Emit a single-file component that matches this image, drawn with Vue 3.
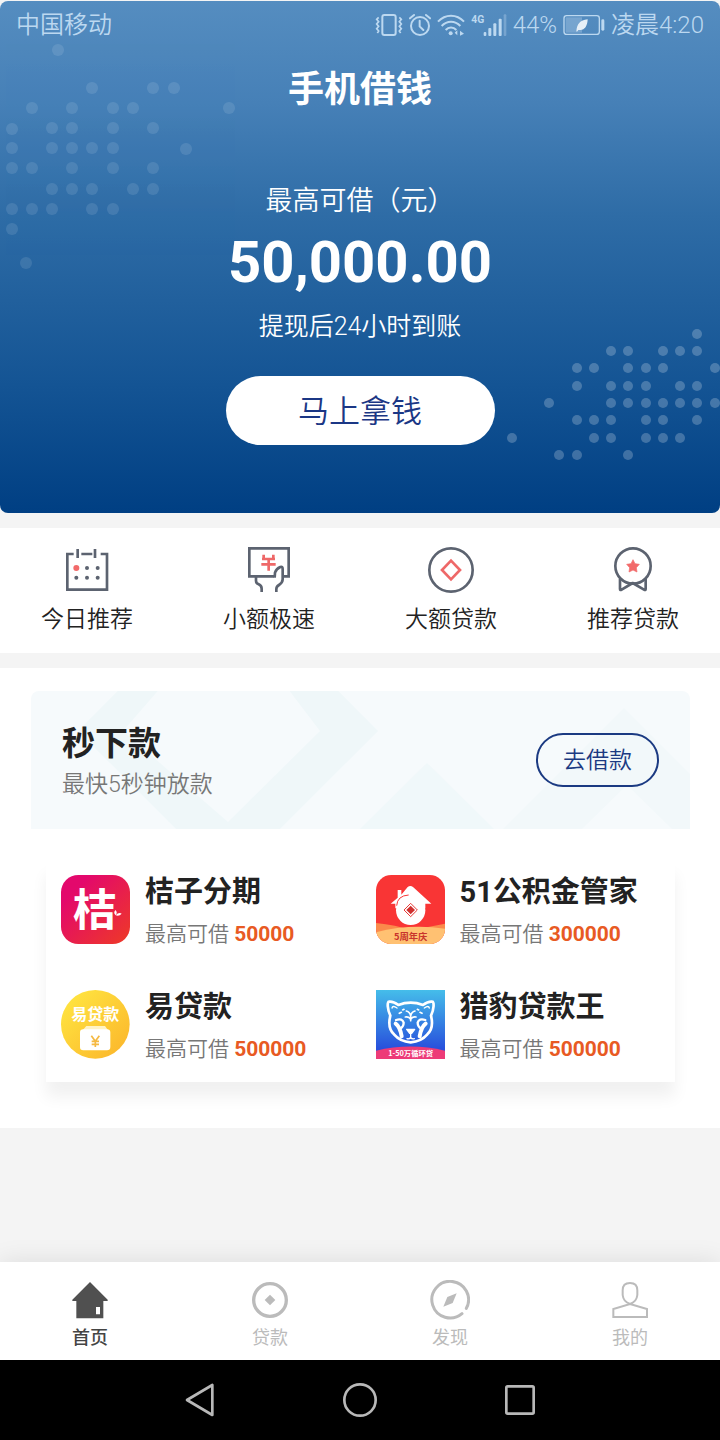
<script setup>
const leftDots = [
  [58, 50], [92, 88], [153, 88], [174, 88], [32, 108], [72, 108], [113, 108], [133, 108], [229, 108],
  [12, 129], [52, 128], [72, 128], [113, 128], [153, 128], [12, 148], [52, 148], [72, 148], [92, 148],
  [113, 148], [186, 149], [12, 168], [32, 168], [72, 168], [113, 168], [153, 168], [52, 189], [72, 189],
  [92, 189], [133, 189], [153, 189], [12, 209], [32, 209], [52, 209], [92, 209], [113, 209], [12, 229], [26, 263],
]
const rightRows = [
  [4, [197]],
  [21, [111, 128, 163, 180, 197]],
  [38, [77, 94, 128, 146, 163, 215]],
  [56, [77, 111, 128, 146, 180, 197]],
  [73, [49, 111, 128, 146, 163, 180, 197, 215]],
  [90, [77, 94, 111, 146, 163, 197]],
  [108, [12, 94, 111, 146, 163, 180]],
  [125, [59, 77, 128]],
]
const shortcuts = [
  { id: 'calendar', label: '今日推荐' },
  { id: 'cash', label: '小额极速' },
  { id: 'coin', label: '大额贷款' },
  { id: 'medal', label: '推荐贷款' },
]
const loans = [
  { id: 'juzi', name: '桔子分期', amount: '50000' },
  { id: 'fund', name: '51公积金管家', amount: '300000' },
  { id: 'yidai', name: '易贷款', amount: '500000' },
  { id: 'cheetah', name: '猎豹贷款王', amount: '500000' },
]
const tabs = [
  { id: 'home', label: '首页' },
  { id: 'loan', label: '贷款' },
  { id: 'find', label: '发现' },
  { id: 'mine', label: '我的' },
]
</script>

<template>
  <div class="page">
    <header class="hero">
      <svg class="dots dots-left" width="240" height="280" aria-hidden="true">
        <circle v-for="(d, i) in leftDots" :key="i" :cx="d[0]" :cy="d[1] - 1" r="6" />
      </svg>
      <svg class="dots dots-right" width="220" height="136" aria-hidden="true">
        <g v-for="row in rightRows" :key="row[0]">
          <circle v-for="x in row[1]" :key="x" :cx="x" :cy="row[0] + 2" r="5" />
        </g>
      </svg>

      <div class="status">
        <span>中国移动</span>
        <div class="status-right">
          <svg width="28" height="24" viewBox="48 36 84 72" fill="none" stroke="currentColor" stroke-width="6">
            <rect x="70" y="42" width="40" height="60" rx="6" />
            <path d="M59 49l-6 6 6 7-6 7 6 7-6 7 6 7-4 6M121 49l6 6-6 7 6 7-6 7 6 7-6 7 4 6" stroke-width="5" />
          </svg>
          <svg width="22" height="24" viewBox="156 36 66 72" fill="none" stroke="currentColor" stroke-width="6" stroke-linecap="round">
            <circle cx="189" cy="75" r="27" />
            <path d="M188 59v17l11 11M159 52l12-10M219 52l-12-10" />
          </svg>
          <svg width="28" height="24" viewBox="240 36 84 72" fill="none" stroke="currentColor" stroke-width="6">
            <path d="M243 62c22-24 56-24 78 0M254 75c16-17 40-17 56 0M266 87c9-10 23-10 32 0" />
            <circle cx="281" cy="97" r="6" fill="currentColor" stroke="none" />
            <path d="M301 88v15l-8-8zM309 104V89l12 9z" fill="currentColor" stroke="none" />
          </svg>
          <svg width="36" height="24" viewBox="340 36 108 72" fill="currentColor">
            <text x="341" y="67" class="net">4G</text>
            <rect x="378" y="93" width="8" height="12" rx="3" /><rect x="392" y="81" width="9" height="24" rx="3" />
            <rect x="407" y="67" width="9" height="38" rx="3" /><rect x="423" y="53" width="9" height="52" rx="3" />
            <rect x="438" y="40" width="8" height="65" rx="3" opacity=".35" />
          </svg>
          <span>44%</span>
          <svg width="42" height="24" viewBox="608 36 126 72" fill="currentColor">
            <rect x="611" y="44" width="106" height="56" rx="8" fill="none" stroke="currentColor" stroke-width="4" />
            <rect x="616" y="49" width="49" height="46" opacity=".35" />
            <rect x="723" y="55" width="9" height="34" rx="4" />
            <path d="M648 91c2-22 10-33 34-36-1 24-12 36-29 31l18-22-21 28z" fill="#e6eff7" />
          </svg>
          <span>凌晨4:20</span>
        </div>
      </div>

      <h1>手机借钱</h1>
      <p class="quota-label">最高可借（元）</p>
      <p class="quota">50,000.00</p>
      <p class="quota-note">提现后24小时到账</p>
      <button class="get" type="button">马上拿钱</button>
    </header>

    <nav class="shortcuts" aria-label="快捷入口">
      <a v-for="s in shortcuts" :key="s.id" href="#">
        <svg v-if="s.id === 'calendar'" width="48" height="48" viewBox="189 78 144 144" fill="none" stroke="#5c6370" stroke-width="8">
          <path d="M221 102h-19v107h119V102h-19M244 102h33M233 87v27M285 87v27" />
          <g fill="#5c6370" stroke="none">
            <circle cx="261" cy="144" r="6" /><circle cx="293" cy="144" r="6" />
            <circle cx="229" cy="173" r="6" /><circle cx="261" cy="173" r="6" /><circle cx="293" cy="173" r="6" />
            <circle cx="229" cy="144" r="9" fill="#f26a6a" />
          </g>
        </svg>
        <svg v-else-if="s.id === 'cash'" width="48" height="48" viewBox="735 78 144 144" fill="none" stroke="#5c6370" stroke-width="8">
          <path d="M823 169h-75V85h118v84h-14" />
          <path d="M768 171v11q0 8 8 11 9 4 9 13v10M829 216v-9q0-7 8-12 11-7 11-17v-31q0-9-7-6-12 5-16 17l-1 15" stroke-width="8" />
          <path d="M791 104v12M820 104v12M786 117h39M784 133h43M806 118v34" stroke="#ee6868" stroke-width="8" />
        </svg>
        <svg v-else-if="s.id === 'coin'" width="48" height="48" viewBox="201 78 144 144" fill="none" stroke="#5c6370" stroke-width="8">
          <circle cx="273" cy="150" r="65" />
          <path d="M273 122l27 28-27 28-27-28z" stroke="#ee6868" stroke-width="8" />
        </svg>
        <svg v-else width="48" height="48" viewBox="747 78 144 144" fill="none" stroke="#5c6370" stroke-width="8" stroke-linejoin="round">
          <circle cx="819" cy="138" r="53" />
          <path d="M780 176v31q0 5 5 2l33-20 34 20q5 3 5-2v-31" />
          <path d="M819 119l6 12 13 2-9 10 2 13-12-6-12 6 2-13-9-10 13-2z" fill="#f26a6a" stroke="#f26a6a" stroke-width="2" />
        </svg>
        <span>{{ s.label }}</span>
      </a>
    </nav>

    <main class="content">
      <section class="banner">
        <svg class="banner-art" viewBox="0 0 659 138" preserveAspectRatio="none" aria-hidden="true">
          <path d="M197-111L347 40 197 190 47 40zM197-81L92 40l105 91 92-91z" fill="#eff7f9" fill-rule="evenodd" />
          <path d="M396 72l67 66H329z" fill="#f0f8fa" />
          <path d="M472 138L593 17l66 66v55h-18l-45-44-45 44z" fill="#f2f8fa" />
        </svg>
        <div class="banner-text">
          <h2>秒下款</h2>
          <p>最快5秒钟放款</p>
        </div>
        <button class="borrow" type="button">去借款</button>
      </section>

      <section class="loans">
        <a v-for="l in loans" :key="l.id" class="loan" href="#">
          <svg v-if="l.id === 'juzi'" class="logo" viewBox="0 0 207 207">
            <defs><linearGradient id="gj" x1="0" y1="0" x2="1" y2="1"><stop offset=".2" stop-color="#e3086c" /><stop offset="1" stop-color="#ee3a26" /></linearGradient></defs>
            <rect width="207" height="207" rx="52" fill="url(#gj)" />
            <text x="101" y="152" text-anchor="middle" class="logo-juzi">桔</text>
            <path d="M164 121q-8-7-1-16 8 7 1 16q9-10 18-5-8 9-18 5z" fill="#fff" />
          </svg>
          <svg v-else-if="l.id === 'fund'" class="logo" viewBox="0 0 207 207">
            <defs><clipPath id="cf"><rect width="207" height="207" rx="46" /></clipPath></defs>
            <g clip-path="url(#cf)">
              <rect width="207" height="207" fill="#f93535" />
              <path d="M0 144q60 6 105 22l102-20v61H0z" fill="#fb8a4b" />
              <path d="M0 172q100-26 207-11v46H0z" fill="#ffc172" />
              <path d="M44 86l21-18V45h11v14l19-23q8-6 16 0l55 50h-18v14H58V86z" fill="#fff" />
              <circle cx="104" cy="106" r="44" fill="#fff" />
              <path d="M62 92q2-30 36-32" fill="none" stroke="#f93535" stroke-width="3" />
              <path d="M104 85l20 20-20 20-20-20z" fill="none" stroke="#e93a35" stroke-width="3" />
              <path d="M104 92l13 13-13 13-13-13z" fill="#cf302f" />
            </g>
            <text x="104" y="195" text-anchor="middle" class="logo-fund">5周年庆</text>
          </svg>
          <svg v-else-if="l.id === 'yidai'" class="logo" viewBox="0 0 207 207">
            <defs><linearGradient id="gy" x1="0" y1="0" x2="1" y2="1"><stop offset=".1" stop-color="#ffe440" /><stop offset="1" stop-color="#fbb32a" /></linearGradient></defs>
            <circle cx="103" cy="103" r="103" fill="url(#gy)" />
            <text x="103" y="89" text-anchor="middle" class="logo-yidai">易贷款</text>
            <path d="M76 108h56l11 15H63z" fill="#fff3c4" />
            <rect x="57" y="118" width="91" height="63" rx="10" fill="#fff" />
            <path d="M91 137l12 17 12-17M103 154v17M92 154h22M92 163h22" fill="none" stroke="#f5b942" stroke-width="5" />
          </svg>
          <svg v-else class="logo" viewBox="0 0 207 207">
            <defs><linearGradient id="gc" x1="0" y1="0" x2="0" y2="1"><stop offset="0" stop-color="#45bdea" /><stop offset=".85" stop-color="#2850dc" /></linearGradient></defs>
            <rect width="207" height="207" fill="url(#gc)" />
            <path d="M0 182q104-25 207 0v25H0z" fill="#ed3b78" />
            <g fill="none" stroke="#fff" stroke-width="8" stroke-linecap="round" stroke-linejoin="round">
              <path d="M43 77C34 58 33 35 39 35q12-2 28 10 37-14 74 0 16-12 28-10c6 0 5 23-4 42 6 24 1 45-11 56-11 13-26 22-50 24-24-2-39-11-50-24-12-11-17-32-11-56z" />
              <path d="M48 54q2-9 15 0M160 54q-2-9-15 0" stroke-width="4" />
              <path d="M104 92V78q-2-12-13-15M104 78q2-12 13-15M104 88q-5-9-16-7M104 88q5-9 16-7M70 70l6-3M138 70l-6-3M80 60l4-2M128 60l-4-2" stroke-width="5" />
              <path d="M60 90q19-6 23 8 0 12-11 18M148 90q-19-6-23 8 0 12 11 18" stroke-width="7" />
              <path d="M59 101q13 9 18 38M149 101q-13 9-18 38" stroke-width="12" />
              <path d="M92 118h24l-9 12h-6zM104 130v11M93 146q8 2 11-4 3 6 11 4" fill="#fff" stroke-width="4" />
            </g>
            <text x="104" y="199" text-anchor="middle" class="logo-cheetah">1-50万循环贷</text>
          </svg>
          <div class="loan-text">
            <h3>{{ l.name }}</h3>
            <p>最高可借 <strong>{{ l.amount }}</strong></p>
          </div>
        </a>
      </section>
    </main>

    <footer class="bottom">
      <nav class="tabs" aria-label="主导航">
        <a v-for="t in tabs" :key="t.id" href="#" :class="{ active: t.id === 'home' }">
          <svg v-if="t.id === 'home'" width="40" height="40" viewBox="212 119 120 120" fill="#505050">
            <path d="M272 125l53 53v4h-13v52h-81v-52h-12v-4zM290 200v22h12v-22z" fill-rule="evenodd" />
          </svg>
          <svg v-else-if="t.id === 'loan'" width="40" height="40" viewBox="752 119 120 120" fill="#bbb">
            <circle cx="812" cy="179" r="49" fill="none" stroke="#bbb" stroke-width="10" />
            <path d="M812 163l16 16-16 16-16-16z" />
          </svg>
          <svg v-else-if="t.id === 'find'" width="40" height="40" viewBox="212 119 120 120" fill="#bbb">
            <path d="M321 204A55 55 0 1 0 308 220" fill="none" stroke="#bbb" stroke-width="9" stroke-linecap="round" />
            <path d="M292 159l-12 29-28 11 12-29z" />
          </svg>
          <svg v-else width="40" height="40" viewBox="752 119 120 120" fill="none" stroke="#bbb" stroke-width="6">
            <path d="M812 128q22 0 22 22v14q-2 20-22 27-20-7-22-27v-14q0-22 22-22zM812 191l51 15v24H762v-24z" />
          </svg>
          <span>{{ t.label }}</span>
        </a>
      </nav>
      <div class="system">
        <button type="button" aria-label="返回">
          <svg width="40" height="40" viewBox="540 420 120 120"><path d="M637 435v90l-76-45z" /></svg>
        </button>
        <button type="button" aria-label="主屏幕">
          <svg width="40" height="40" viewBox="0 0 120 120"><circle cx="60" cy="60" r="47" /></svg>
        </button>
        <button type="button" aria-label="最近任务">
          <svg width="40" height="40" viewBox="0 0 120 120"><rect x="19" y="19" width="82" height="82" rx="4" /></svg>
        </button>
      </div>
    </footer>
  </div>
</template>

<style>
body {
  background: #f4f4f4;
}
</style>

<style scoped>
.page {
  display: flex;
  flex-direction: column;
  min-height: 100vh;
  font-family: Roboto, "Noto Sans CJK SC", sans-serif;
  color: #222;
  background: #f4f4f4;
}
h1, h2, h3, p { margin: 0; }
a { color: inherit; text-decoration: none; }
button { font-family: inherit; cursor: pointer; }
svg { display: block; }

.hero {
  position: relative;
  display: flex;
  flex-direction: column;
  align-items: center;
  margin-top: 1px;
  padding-bottom: 68px;
  border-radius: 8px;
  color: #fff;
  background: linear-gradient(#558dc0, #4680b7 20%, #2e6ca6 42%, #145494 75%, #003f83);
  overflow: hidden;
}
.dots { position: absolute; fill: #fff; }
.dots-left { top: 0; left: 0; opacity: .1; }
.dots-right { right: 0; bottom: 49px; opacity: .22; }
.status {
  align-self: stretch;
  display: flex;
  justify-content: space-between;
  padding: 0 16px;
  font-size: 24px;
  line-height: 48px;
  font-weight: 350;
  color: #bcd8f0;
}
.status-right { display: flex; align-items: center; gap: 6px; }
.net { font: 700 31px Roboto, sans-serif; }
h1 { margin-top: 16px; font-size: 36px; line-height: 50px; font-weight: 700; }
.quota-label {
  margin-top: 66px;
  font-family: Roboto, "Noto Sans CJK TC", sans-serif;
  font-size: 27px;
  line-height: 40px;
  font-weight: 350;
}
.quota { margin-top: 7px; font-size: 58px; line-height: 68px; font-weight: 700; }
.quota-note { margin-top: 11px; font-size: 25px; line-height: 40px; font-weight: 350; }
.get {
  position: relative;
  width: 269px;
  height: 69px;
  margin-top: 29px;
  padding: 0 0 4px;
  border: 0;
  border-radius: 35px;
  background: #fff;
  color: #1b3785;
  font-size: 31px;
  font-weight: 350;
}

.shortcuts {
  display: flex;
  justify-content: space-between;
  margin-top: 15px;
  padding: 18px 41px 15px;
  background: #fff;
}
.shortcuts a {
  display: flex;
  flex-direction: column;
  align-items: center;
  gap: 8px;
  font-size: 23px;
  line-height: 36px;
  font-weight: 350;
}

.content { margin-top: 15px; padding: 23px 30px 46px 31px; background: #fff; }
.banner {
  position: relative;
  display: flex;
  align-items: center;
  justify-content: space-between;
  height: 138px;
  padding: 0 31px;
  border-radius: 8px 8px 0 0;
  background: #f6fafc;
  overflow: hidden;
}
.banner-art { position: absolute; inset: 0; width: 100%; height: 100%; }
.banner-text, .borrow { position: relative; }
.banner-text { padding-top: 4px; }
h2 { font-size: 33px; line-height: 46px; font-weight: 700; }
.banner-text p { font-size: 23px; line-height: 36px; font-weight: 350; color: #777; }
.borrow {
  width: 123px;
  height: 54px;
  padding: 0 0 4px;
  border: 2px solid #1b3a82;
  border-radius: 27px;
  background: transparent;
  color: #1b3a82;
  font-size: 23px;
  font-weight: 350;
}

.loans {
  display: grid;
  grid-template-columns: 1fr 1fr;
  row-gap: 46px;
  margin: 31px 15px 0;
  padding: 15px 0 23px;
  background: #fff;
  box-shadow: 0 15px 15px rgba(0, 0, 0, .06);
}
.loan { display: flex; gap: 15px; height: 69px; padding-left: 15px; }
.logo { flex: none; width: 69px; height: 69px; }
.logo text { font-family: "Noto Sans CJK SC", sans-serif; font-weight: 700; }
.logo-juzi { font-size: 132px; fill: #fff; }
.logo-fund { font-size: 28px; fill: #c9342c; }
.logo-yidai { font-size: 48px; fill: #fff; }
.logo-cheetah { font-size: 22px; fill: #fff; }
.loan-text {
  display: flex;
  flex-direction: column;
  justify-content: center;
  padding-top: 5px;
  white-space: nowrap;
}
h3 { font-size: 29px; line-height: 44px; font-weight: 700; }
.loan-text p { font-size: 21px; line-height: 40px; font-weight: 350; color: #777; }
.loan-text strong { font-weight: 700; color: #e85a23; }

.bottom { margin-top: auto; }
.tabs {
  display: grid;
  grid-template-columns: repeat(4, 1fr);
  padding: 18px 0 9px;
  background: #fff;
  box-shadow: 0 0 24px rgba(0, 0, 0, .1);
}
.tabs a {
  display: flex;
  flex-direction: column;
  align-items: center;
  gap: 5px;
  font-size: 18px;
  line-height: 26px;
  color: #bbb;
}
.tabs .active { color: #444; font-weight: 500; }
.system {
  position: relative;
  display: flex;
  justify-content: center;
  gap: 120px;
  padding: 20px 0;
  background: #000;
}
.system button { padding: 0; border: 0; background: none; }
.system svg { fill: none; stroke: #b8b8b8; stroke-width: 8; stroke-linejoin: round; }
</style>
